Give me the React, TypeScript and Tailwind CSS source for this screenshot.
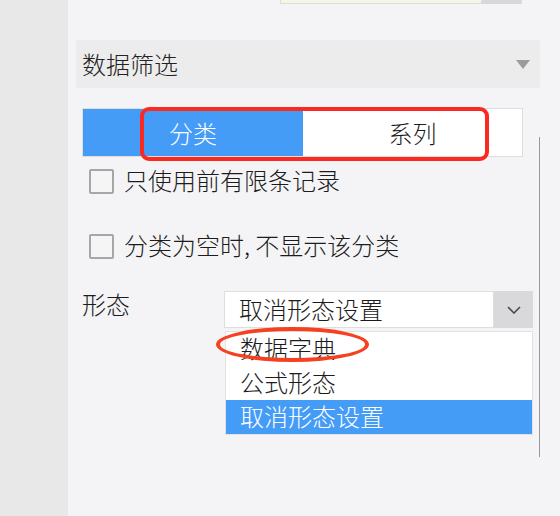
const font = { fontFamily: '"Noto Sans CJK SC", "Noto Sans", sans-serif' };

const Checkbox = ({ label }: { label: string }) => (
  <div className="flex items-center ml-[21px] h-[26px]">
    <div className="w-[25px] h-[25px] border-2 border-[#a6a6a6] rounded-[2px] bg-[#f5f5f5] shrink-0" />
    <span className="ml-[10px] text-[24px] leading-[26px] text-[#1c1c1c] -mt-[2px]">{label}</span>
  </div>
);

export default function App() {
  return (
    <div className="flex w-[560px] h-[516px] overflow-hidden bg-[#f4f4f6] font-light" style={font}>
      {/* left strip */}
      <div className="w-[68px] shrink-0 bg-[#e8e8e8]" />

      <div className="flex-1 flex flex-col">
        {/* bottom edge of the input above */}
        <div className="flex ml-[212px] h-[4px]">
          <div className="w-[202px] bg-[#f6f6e6] border-x border-b border-[#dcdcd8]" />
          <div className="w-[40px] bg-[#d8d8dc]" />
        </div>

        {/* section header */}
        <div className="mt-[36px] ml-[8px] w-[464px] h-[48px] bg-[#ececec] flex items-center justify-between pl-[6px] pr-[10px]">
          <span className="text-[24px] leading-[30px] text-[#222]">数据筛选</span>
          <svg width="14" height="9" viewBox="0 0 14 9">
            <polygon points="0,0 14,0 7,9" fill="#9c9c9c" />
          </svg>
        </div>

        <div className="flex">
          <div className="w-[471px] flex flex-col">
            {/* segmented control */}
            <div className="relative mt-[20px] ml-[14px] w-[441px] h-[49px] flex border border-[#dedede] bg-white">
              <div className="w-[220px] bg-[#449cf7] flex items-center justify-center text-white text-[24px]">
                分类
              </div>
              <div className="flex-1 flex items-center justify-center text-[#1c1c1c] text-[24px]">
                系列
              </div>
              <div className="absolute left-[57px] top-[-2px] w-[349px] h-[54px] border-[4px] border-[#fb2a21] rounded-[9px]" />
            </div>

            <div className="mt-[11px]">
              <Checkbox label="只使用前有限条记录" />
            </div>
            <div className="mt-[39px]">
              <Checkbox label="分类为空时, 不显示该分类" />
            </div>

            {/* 形态 row */}
            <div className="flex items-start mt-[32px]">
              <span className="ml-[14px] w-[142px] text-[24px] leading-[26px] text-[#1c1c1c]">形态</span>
              <div className="flex flex-col">
                <div className="flex w-[309px] h-[37px]">
                  <div className="flex-1 bg-white border border-[#dedede] flex items-center pl-[14px] pb-[2px] text-[24px] text-[#1c1c1c]">
                    取消形态设置
                  </div>
                  <div className="w-[39px] bg-[#d9d9dc] flex items-center justify-center">
                    <svg width="14" height="8" viewBox="0 0 14 8">
                      <polyline points="1,1 7,7 13,1" fill="none" stroke="#4a4a4a" strokeWidth="1.6" />
                    </svg>
                  </div>
                </div>

                {/* dropdown list */}
                <div className="relative mt-[3px] ml-[1px] w-[308px] bg-white border border-[#e2e2e2] flex flex-col">
                  <div className="h-[34px] flex items-center pl-[14px] pb-[2px] text-[24px] text-[#1c1c1c]">数据字典</div>
                  <div className="h-[34px] flex items-center pl-[14px] pb-[2px] text-[24px] text-[#1c1c1c]">公式形态</div>
                  <div className="h-[34px] flex items-center pl-[14px] pb-[2px] text-[24px] text-white bg-[#449cf7]">取消形态设置</div>
                  <div className="absolute left-[-10px] top-[-5px] w-[153px] h-[35px] border-[4px] border-[#f6401f] rounded-[50%]" />
                </div>
              </div>
            </div>
          </div>

          {/* divider line */}
          <div className="w-px h-[320px] mt-[49px] bg-[#9a9a9a]" />
        </div>
      </div>
    </div>
  );
}
